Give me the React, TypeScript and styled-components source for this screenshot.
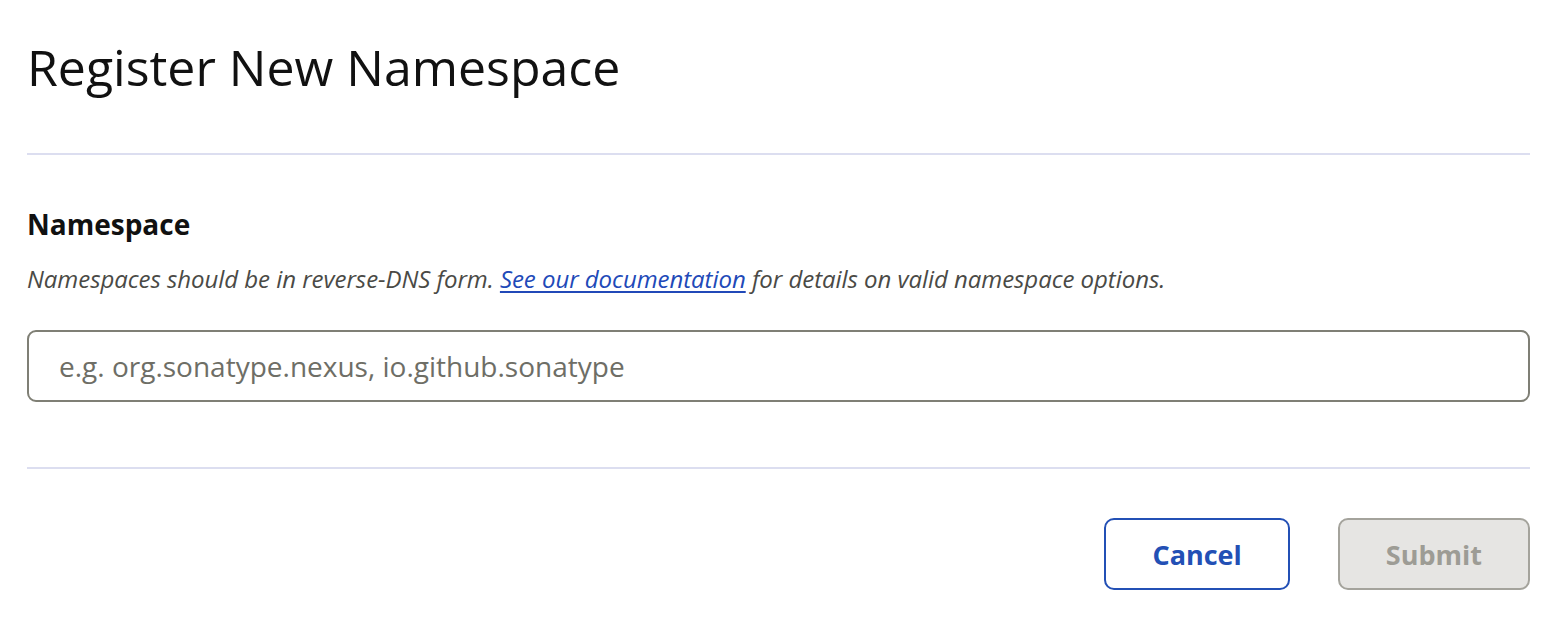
import styled, { createGlobalStyle } from "styled-components";

const GlobalStyle = createGlobalStyle`
  html, body {
    margin: 0;
    padding: 0;
    background: #fff;
  }
  body {
    font-family: "Open Sans", "Noto Sans", sans-serif;
    color: #111;
  }
`;

const Page = styled.div`
  padding: 25px 24px 0 27px;
`;

const Title = styled.h1`
  margin: 0;
  font-size: 50px;
  font-weight: 400;
  line-height: 84px;
  color: #111;
`;

const Divider = styled.hr<{ $top: number; $bottom: number }>`
  border: none;
  height: 2px;
  background: #dcdef0;
  margin: ${(p) => p.$top}px 0 ${(p) => p.$bottom}px;
`;

const Field = styled.div`
  display: flex;
  flex-direction: column;
`;

const Label = styled.label`
  font-size: 28px;
  font-weight: 700;
  line-height: 38px;
  color: #111;
`;

const Help = styled.p`
  margin: 20px 0 0;
  font-size: 24px;
  font-style: italic;
  line-height: 32px;
  letter-spacing: -0.05px;
  color: #4a4a46;

  a {
    color: #2149b8;
    text-decoration: underline;
    text-underline-offset: 3px;
  }
`;

const Input = styled.input`
  box-sizing: border-box;
  margin-top: 35px;
  width: 100%;
  height: 72px;
  padding: 0 30px;
  border: 2px solid #7f7f75;
  border-radius: 9px;
  font-family: inherit;
  font-size: 28px;
  color: #111;
  outline: none;

  &::placeholder {
    color: #6e6e66;
  }
`;

const Actions = styled.div`
  display: flex;
  justify-content: flex-end;
  gap: 48px;
`;

const Button = styled.button<{ $variant: "secondary" | "disabled" }>`
  box-sizing: border-box;
  height: 72px;
  padding: 0 46px;
  border-radius: 10px;
  font-family: inherit;
  font-size: 27px;
  font-weight: 700;
  border: 2px solid
    ${(p) => (p.$variant === "secondary" ? "#2350b5" : "#a4a39c")};
  background: ${(p) => (p.$variant === "secondary" ? "#fff" : "#e6e5e3")};
  color: ${(p) => (p.$variant === "secondary" ? "#2350b5" : "#9d9c95")};
  cursor: ${(p) => (p.$variant === "secondary" ? "pointer" : "default")};
`;

export default function App() {
  return (
    <Page>
      <GlobalStyle />
      <Title>Register New Namespace</Title>
      <Divider $top={44} $bottom={50} />
      <Field>
        <Label htmlFor="namespace">Namespace</Label>
        <Help>
          Namespaces should be in reverse-DNS form.{" "}
          <a href="#">See our documentation</a> for details on valid namespace
          options.
        </Help>
        <Input
          id="namespace"
          placeholder="e.g. org.sonatype.nexus, io.github.sonatype"
        />
      </Field>
      <Divider $top={65} $bottom={49} />
      <Actions>
        <Button $variant="secondary">Cancel</Button>
        <Button $variant="disabled" disabled>
          Submit
        </Button>
      </Actions>
    </Page>
  );
}
